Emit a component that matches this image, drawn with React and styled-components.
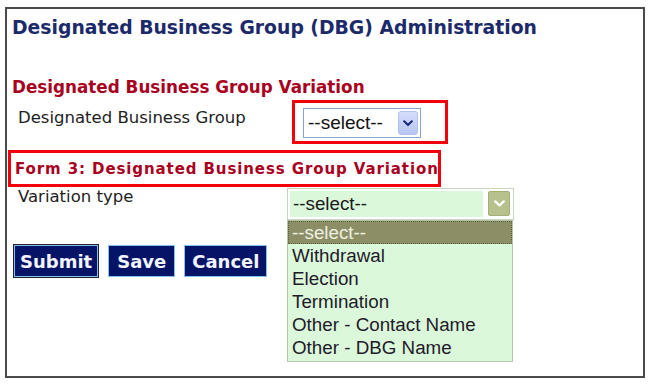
import React from "react";
import styled, { createGlobalStyle } from "styled-components";

const Global = createGlobalStyle`
  html, body { margin: 0; padding: 0; background: #fff; }
  body { width: 652px; height: 384px; overflow: hidden; }
`;

const Panel = styled.div`
  box-sizing: border-box;
  margin: 7px 0 0 5px;
  width: 640px;
  height: 371px;
  border: 2px solid #4a4a4a;
  font-family: "DejaVu Sans", Verdana, sans-serif;
`;

const Title = styled.h1`
  margin: 8px 0 0 5px;
  font-size: 18.8px;
  line-height: 22px;
  font-weight: bold;
  color: #1c2a6b;
`;

const SectionHeading = styled.h2`
  margin: 38px 0 0 5px;
  font-size: 16.8px;
  line-height: 20px;
  font-weight: bold;
  color: #a8001e;
`;

const Row = styled.div`
  display: flex;
  align-items: flex-start;
  margin-top: ${(p) => p.$mt || 0}px;
`;

const Label = styled.div`
  width: ${(p) => p.$w}px;
  margin-left: 11px;
  padding-top: ${(p) => p.$pt}px;
  font-size: 16.5px;
  line-height: 18px;
  color: #222;
`;

const RedBox = styled.div`
  box-sizing: border-box;
  border: 3px solid #f2000c;
  width: ${(p) => p.$w}px;
  height: ${(p) => p.$h}px;
  margin-left: ${(p) => p.$ml || 0}px;
  margin-top: ${(p) => p.$mt || 0}px;
  display: flex;
  align-items: ${(p) => p.$align || "flex-start"};
  padding: ${(p) => p.$pad};
`;

const BlueSelect = styled.div`
  box-sizing: border-box;
  width: 118px;
  height: 30px;
  border: 1px solid #8aa6cc;
  display: flex;
  align-items: center;
  justify-content: space-between;
  padding: 0 2px 0 4px;
  font-family: "Liberation Sans", Arial, sans-serif;
  font-size: 19px;
  color: #111;
  background: #fff;
`;

const BlueArrow = styled.div`
  width: 20px;
  height: 24px;
  border-radius: 3px;
  background: linear-gradient(#d6dcfb, #b9c6f5);
  border: 1px solid #b2c0ee;
  display: flex;
  align-items: center;
  justify-content: center;
  box-sizing: border-box;
`;

const FormHeading = styled.div`
  font-size: 15px;
  font-weight: bold;
  letter-spacing: 0.9px;
  white-space: nowrap;
  color: #a8001e;
  line-height: 18px;
`;

const LeftCol = styled.div`
  width: 280px;
  display: flex;
  flex-direction: column;
`;

const Buttons = styled.div`
  display: flex;
  gap: 9px;
  margin: 38px 0 0 6px;
  align-items: center;
`;

const Button = styled.button`
  box-sizing: border-box;
  height: ${(p) => (p.$focus ? 34 : 32)}px;
  padding: 0 ${(p) => p.$px}px;
  background: #061468;
  color: #f2f4ff;
  font-family: "DejaVu Sans", Verdana, sans-serif;
  font-size: 18px;
  font-weight: bold;
  border: 1px solid ${(p) => (p.$focus ? "#222" : "#86c0f0")};
  box-shadow: ${(p) => (p.$focus ? "inset 0 0 0 1px #86c0f0" : "none")};
  cursor: pointer;
`;

const Dropdown = styled.div`
  width: 227px;
  margin-top: 1px;
  display: flex;
  flex-direction: column;
  font-family: "Liberation Sans", Arial, sans-serif;
  font-size: 18.8px;
`;

const GreenSelect = styled.div`
  box-sizing: border-box;
  height: 32px;
  border: 1px solid #c8d6c0;
  background: #fff;
  padding: 2px;
  display: flex;
  gap: 5px;
`;

const GreenText = styled.div`
  flex: 1;
  background: #dcf8da;
  display: flex;
  align-items: center;
  padding-left: 3px;
  color: #1a1a1a;
`;

const GreenArrow = styled.div`
  box-sizing: border-box;
  width: 22px;
  height: 25px;
  margin-right: 1px;
  border-radius: 2px;
  background: #b7c18e;
  border: 1px solid #a3ae78;
  display: flex;
  align-items: center;
  justify-content: center;
`;

const List = styled.div`
  box-sizing: border-box;
  width: 226px;
  border: 1px solid #b6c4a8;
  background: #dcf8da;
  padding: 0 0 2px;
`;

const Item = styled.div`
  box-sizing: border-box;
  height: 23px;
  line-height: 21px;
  padding-left: 3px;
  white-space: nowrap;
  color: ${(p) => (p.$active ? "#eef0e2" : "#221a2a")};
  background: ${(p) => (p.$active ? "#8c8f66" : "transparent")};
  border: ${(p) => (p.$active ? "1px dotted #5c5e40" : "1px solid transparent")};
`;

const Chevron = ({ color, w = 10 }) => (
  <svg width={w} height={w * 0.7} viewBox="0 0 10 7">
    <path d="M1.2 1.3 L5 5 L8.8 1.3" fill="none" stroke={color} strokeWidth="2.2" strokeLinecap="round" strokeLinejoin="round" />
  </svg>
);

const options = ["--select--", "Withdrawal", "Election", "Termination", "Other - Contact Name", "Other - DBG Name"];

export default function App() {
  return (
    <>
      <Global />
      <Panel>
        <Title>Designated Business Group (DBG) Administration</Title>
        <SectionHeading>Designated Business Group Variation</SectionHeading>
        <Row $mt={3}>
          <Label $w={274} $pt={9}>Designated Business Group</Label>
          <RedBox $w={156} $h={44} $pad="5px 0 0 8px">
            <BlueSelect>
              <span>--select--</span>
              <BlueArrow><Chevron color="#1e2f7a" /></BlueArrow>
            </BlueSelect>
          </RedBox>
        </Row>
        <RedBox $w={433} $h={37} $ml={1} $mt={6} $align="center" $pad="0 0 0 4px">
          <FormHeading>Form 3: Designated Business Group Variation</FormHeading>
        </RedBox>
        <Row>
          <LeftCol>
            <Label $w={260} $pt={1}>Variation type</Label>
            <Buttons>
              <Button $focus $px={6}>Submit</Button>
              <Button $px={8}>Save</Button>
              <Button $px={7}>Cancel</Button>
            </Buttons>
          </LeftCol>
          <Dropdown>
            <GreenSelect>
              <GreenText>--select--</GreenText>
              <GreenArrow><Chevron color="#ffffff" w={11} /></GreenArrow>
            </GreenSelect>
            <List>
              {options.map((o, i) => (
                <Item key={o} $active={i === 0}>{o}</Item>
              ))}
            </List>
          </Dropdown>
        </Row>
      </Panel>
    </>
  );
}
